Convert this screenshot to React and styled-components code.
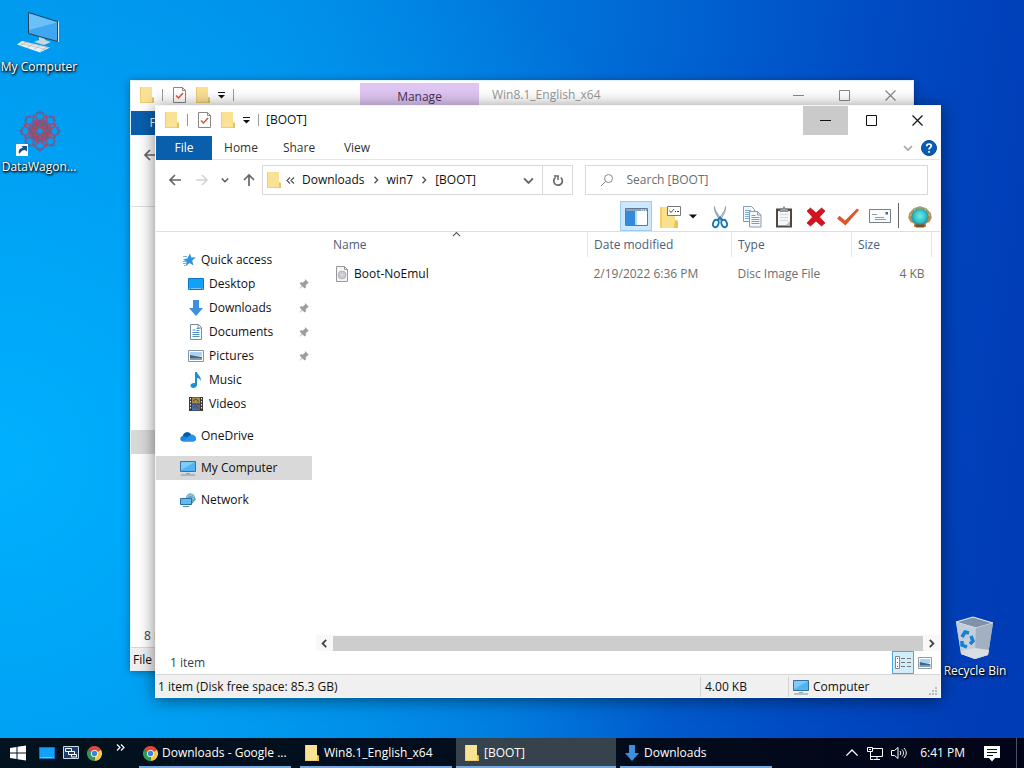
import React from "react";
import styled, { createGlobalStyle, css } from "styled-components";

//Styles
const GlobalStyle = createGlobalStyle`
  * {
    box-sizing: border-box;
  }
  body {
    margin: 0;
    overflow: hidden;
    font-family: "Open Sans", "Noto Sans", sans-serif;
    font-size: 12px;
    line-height: 16px;
    color: #111;
  }
  button, input {
    font: inherit;
    color: inherit;
    background: none;
    border: none;
    padding: 0;
    margin: 0;
  }
  svg {
    display: block;
    flex: none;
  }
`;

const Screen = styled.div`
  display: flex;
  flex-direction: column;
  height: 100vh;
  background: radial-gradient(
      ellipse 70% 90% at 0% 60%,
      rgba(0, 178, 255, 0.95) 0%,
      rgba(0, 170, 250, 0.7) 40%,
      rgba(0, 120, 230, 0) 100%
    ),
    linear-gradient(97deg, #0090e8 0%, #008ae6 25%, #0070d8 52%, #004cc4 78%, #003cb6 96%);
`;

const Workspace = styled.main`
  position: relative;
  flex: 1;
  min-height: 0;
`;

const Shortcut = styled.button`
  position: absolute;
  left: ${({ $left }) => $left || "auto"};
  right: ${({ $right }) => $right || "auto"};
  top: ${({ $top }) => $top};
  width: 78px;
  display: flex;
  flex-direction: column;
  align-items: center;
  gap: 3px;
  color: white;
  white-space: nowrap;
  text-shadow: 1px 1px 2px black, 0 1px 3px black;
`;

const WindowFrame = styled.section`
  position: absolute;
  left: ${({ $left }) => $left};
  top: ${({ $top }) => $top};
  right: ${({ $right }) => $right};
  bottom: ${({ $bottom }) => $bottom};
  display: flex;
  flex-direction: column;
  overflow: hidden;
  background: white;
  border: 1px solid ${({ $active }) => ($active ? "#f4f6f8" : "#e6eef5")};
  box-shadow: ${({ $active }) =>
    $active ? "0 2px 16px rgba(0, 0, 0, 0.5)" : "0 1px 8px rgba(0, 0, 0, 0.35)"};
`;

const TitleBar = styled.header`
  display: flex;
  align-items: flex-start;
  flex: none;
  height: 30px;
  padding-left: 8px;
  color: ${({ $active }) => ($active ? "#111" : "#999")};
`;

const QuickTools = styled.div`
  display: flex;
  align-items: center;
  gap: 6px;
  height: 28px;
`;

const Divider = styled.span`
  width: 1px;
  height: 12px;
  margin-left: 1px;
  background: #999;
`;

const ToolDivider = styled(Divider)`
  height: 25px;
  margin: 0 5px 0 2px;
  background: #666;
`;

const Title = styled.h1`
  flex: 1;
  margin: 0;
  padding-left: ${({ $pad }) => $pad || "7px"};
  font-size: 12px;
  font-weight: 400;
  line-height: 28px;
`;

const ContextTab = styled.div`
  align-self: flex-end;
  width: 119px;
  height: 28px;
  margin-left: 126px;
  padding-top: 6px;
  background: #dfc6f3;
  color: #4b2f5c;
  text-align: center;
`;

const CaptionButtons = styled.div`
  display: flex;
  gap: 1px;
`;

const CaptionButton = styled.button`
  display: flex;
  align-items: center;
  justify-content: center;
  width: 45px;
  height: 29px;
  background: ${({ $hot }) => ($hot ? "#cacaca" : "transparent")};
`;

const RibbonTabs = styled.nav`
  display: flex;
  align-items: center;
  flex: none;
  height: 24px;
  border-bottom: 1px solid #e3e5e8;
  color: #333;
`;

const RibbonTab = styled.button`
  width: 58px;
  height: 24px;
  ${({ $file }) =>
    $file &&
    css`
      width: 56px;
      background: #0a5fad;
      color: white;
    `}
`;

const RibbonEnd = styled.div`
  display: flex;
  align-items: center;
  gap: 8px;
  margin-left: auto;
  padding-right: 3px;
`;

const NavBar = styled.div`
  display: flex;
  align-items: center;
  flex: none;
  height: 40px;
  padding: 0 12px;
`;

const NavButtons = styled.div`
  display: flex;
  align-items: center;
  justify-content: space-between;
  width: 88px;
  margin-right: 6px;
`;

const IconButton = styled.button`
  display: flex;
  align-items: center;
  justify-content: center;
`;

const QuickButton = styled(IconButton)`
  width: ${({ $wide }) => ($wide ? "20px" : "auto")};
`;

const AddressBar = styled.div`
  display: flex;
  align-items: center;
  flex: 306;
  height: 30px;
  padding-left: 3px;
  border: 1px solid #d9d9d9;
`;

const Crumbs = styled.div`
  display: flex;
  align-items: center;
  gap: 7px;
  flex: 1;
  padding-left: 4px;
`;

const RefreshButton = styled(IconButton)`
  width: 30px;
  height: 28px;
  margin-left: 8px;
  border-left: 1px solid #d9d9d9;
`;

const SearchBox = styled.label`
  display: flex;
  align-items: center;
  gap: 12px;
  flex: 326;
  height: 30px;
  margin-left: 12px;
  padding-left: 14px;
  border: 1px solid #d9d9d9;
`;

const SearchInput = styled.input`
  flex: 1;
  min-width: 0;
  outline: none;
  &::placeholder {
    color: #6d6d6d;
    opacity: 1;
  }
`;

const ToolBar = styled.div`
  display: flex;
  align-items: center;
  justify-content: flex-end;
  flex: none;
  height: 32px;
  padding-right: 4px;
  border-bottom: 1px solid #dcdfe3;
`;

const ToolButton = styled(IconButton)`
  width: 32px;
  height: 30px;
  padding-top: 2px;
  ${({ $wide }) =>
    $wide &&
    css`
      width: 52px;
      gap: 8px;
    `}
  ${({ $on }) =>
    $on &&
    css`
      background: #cce8ff;
      border: 1px solid #99ccee;
    `}
`;

const Body = styled.div`
  display: flex;
  flex: 1;
  min-height: 0;
`;

const Sidebar = styled.nav`
  width: 160px;
  padding-top: 16px;
`;

const TreeGroup = styled.div`
  margin-bottom: 8px;
`;

const TreeItem = styled.button`
  display: flex;
  align-items: center;
  gap: 5px;
  width: 156px;
  height: 24px;
  padding: 0 2px 0 ${({ $child }) => ($child ? "32px" : "24px")};
  background: ${({ $selected }) => ($selected ? "#d9d9d9" : "transparent")};
  text-align: left;
`;

const TreeLabel = styled.span`
  flex: 1;
`;

const Content = styled.div`
  display: flex;
  flex-direction: column;
  flex: 1;
  min-width: 0;
`;

const FileTable = styled.table`
  width: calc(100% - 8px);
  border-collapse: collapse;
  table-layout: fixed;
  text-align: left;
`;

const HeadCell = styled.th`
  position: relative;
  width: ${({ $width }) => $width || "auto"};
  height: 25px;
  padding: 0 6px 0 ${({ $first }) => ($first ? "17px" : "6px")};
  border-right: 1px solid #e5e5e5;
  color: #4c607a;
  font-weight: 400;
`;

const SortMark = styled.span`
  position: absolute;
  top: -2px;
  left: 50%;
`;

const Cell = styled.td`
  height: 33px;
  padding: 0 7px 0 6px;
  color: #6d6d6d;
  text-align: ${({ $right }) => ($right ? "right" : "left")};
`;

const NameCell = styled(Cell)`
  padding-left: 19px;
  color: #111;
`;

const FileName = styled.div`
  display: flex;
  align-items: center;
  gap: 5px;
`;

const ScrollBar = styled.div`
  display: flex;
  align-items: center;
  height: 16px;
  margin-top: auto;
  background: #f8f8f8;
`;

const ScrollArrow = styled(IconButton)`
  width: 17px;
  height: 16px;
`;

const ScrollThumb = styled.div`
  flex: 1;
  height: 15px;
  background: #cdcdcd;
`;

const CountBar = styled.div`
  display: flex;
  align-items: center;
  flex: none;
  height: 23px;
  padding: 0 4px 0 ${({ $pad }) => $pad || "14px"};
  color: #333f55;
`;

const ViewButtons = styled.div`
  display: flex;
  margin-left: auto;
`;

const ViewButton = styled(IconButton)`
  width: 22px;
  height: 23px;
  ${({ $on }) =>
    $on &&
    css`
      background: #cfeef9;
      border: 1px solid #4fa8d8;
    `}
`;

const StatusBar = styled.footer`
  display: flex;
  align-items: center;
  flex: none;
  height: 23px;
  padding: 2px 0 0 2px;
  border-top: 1px solid #d7d7d7;
  background: #f0f0f0;
  white-space: nowrap;
`;

const StatusCell = styled.div`
  display: flex;
  align-items: center;
  gap: 4px;
  height: 20px;
  width: ${({ $width }) => $width || "auto"};
  flex: ${({ $width }) => ($width ? "none" : 1)};
  padding-left: ${({ $width }) => ($width ? "4px" : 0)};
  border-left: ${({ $width }) => ($width ? "1px solid #d4d4d4" : "none")};
`;

const Grip = styled.span`
  align-self: flex-end;
  margin-left: auto;
  padding: 0 2px 1px 0;
`;

const BackTree = styled.div`
  flex: 1;
  padding-top: 223px;
`;

const BackRow = styled.div`
  width: 156px;
  height: 24px;
  background: #d9d9d9;
`;

const TaskBar = styled.footer`
  display: flex;
  align-items: center;
  flex: none;
  height: 30px;
  background: linear-gradient(90deg, #02121f, #030c1c 60%, #020518);
  color: white;
`;

const Pinned = styled.div`
  display: flex;
  align-items: center;
  gap: 8px;
  width: 139px;
  padding-left: 9px;
`;

const StartButton = styled(IconButton)`
  margin-right: 4px;
`;

const MoreButton = styled(IconButton)`
  margin-left: 6px;
  padding-bottom: 12px;
`;

const TaskButton = styled.button`
  display: flex;
  align-items: center;
  gap: 4px;
  width: ${({ $active }) => ($active ? "160px" : "152px")};
  height: 30px;
  margin-right: ${({ $gap }) => $gap || "4px"};
  padding-left: ${({ $active }) => ($active ? "8px" : "4px")};
  box-shadow: inset 0 -2px #76a9e0;
  background: ${({ $active }) => ($active ? "#36434d" : "transparent")};
  white-space: nowrap;
`;

const Tray = styled.div`
  display: flex;
  align-items: center;
  gap: 8px;
  height: 30px;
  margin-left: auto;
`;

const Clock = styled.span`
  padding: 0 11px 0 4px;
`;

const ShowDesktop = styled.button`
  width: 8px;
  height: 30px;
  margin-left: 8px;
  border-left: 1px solid #4a5160;
`;

//Icons
const FolderIcon = () => (
  <svg width="16" height="17" viewBox="0 0 16 17">
    <path d="M1 1h12v9l2 1v5H1z" fill="#f5d374" />
    <path d="M1 0h12v16H1z" fill="#fbe194" />
    <path d="M1 0h1v16H1zM1 15h12v1H1z" fill="#efcd74" />
    <path d="M13 10l2 1v5h-2z" fill="#eac559" />
  </svg>
);

const CheckDocIcon = () => (
  <svg width="15" height="16" viewBox="0 0 15 16">
    <path d="M1.500 .5h9l3 3v12h-12z" fill="white" stroke="#888" />
    <path d="M10.500 .5v3h3" fill="none" stroke="#888" />
    <path d="M4 8.500l2.500 2.500 4.500-5" fill="none" stroke="#d0563c" strokeWidth="1.500" />
  </svg>
);

const QuickArrow = () => (
  <svg width="9" height="8" viewBox="0 0 9 8">
    <path d="M1 1.500h7" stroke="#111" />
    <path d="M1 4h7L4.500 7.500z" fill="#111" />
  </svg>
);

const Chevron = ({ dir = "right", size = 8, color = "#555", weight = 1.4 }) => {
  const turn = { right: 0, down: 90, left: 180, up: 270 }[dir];
  return (
    <svg width={size} height={size} viewBox="0 0 8 8">
      <path
        d="M2.500 .8L5.700 4 2.500 7.200"
        fill="none"
        stroke={color}
        strokeWidth={weight}
        transform={`rotate(${turn} 4 4)`}
      />
    </svg>
  );
};

const DoubleChevron = ({ flip, color = "#555", size = 9 }) => (
  <svg width={size} height={size} viewBox="0 0 9 9">
    <path
      d={flip ? "M1 1.500l3 3-3 3M5 1.500l3 3-3 3" : "M4 1.500l-3 3 3 3M8 1.500l-3 3 3 3"}
      fill="none"
      stroke={color}
      strokeWidth="1.200"
    />
  </svg>
);

const Arrow = ({ color = "#666", up }) => (
  <svg width="14" height="14" viewBox="0 0 14 14">
    <path
      d={up ? "M7 13V2M2 7l5-5 5 5" : "M13 7H2M7 2L2 7l5 5"}
      fill="none"
      stroke={color}
      strokeWidth="1.700"
    />
  </svg>
);

const ForwardArrow = () => (
  <svg width="14" height="14" viewBox="0 0 14 14">
    <path d="M1 7h11M7 2l5 5-5 5" fill="none" stroke="#d2d2d2" strokeWidth="1.500" />
  </svg>
);

const RefreshIcon = () => (
  <svg width="12" height="13" viewBox="0 0 12 13">
    <path d="M8.800 3.600a4.300 4.300 0 1 1-5.200-.2" fill="none" stroke="#666" strokeWidth="1.700" />
    <path d="M2 2h4v4" fill="none" stroke="#666" strokeWidth="1.500" />
  </svg>
);

const SearchIcon = () => (
  <svg width="14" height="14" viewBox="0 0 14 14">
    <circle cx="8.500" cy="5.500" r="4" fill="none" stroke="#888" />
    <path d="M5.500 8.500L1 13" stroke="#888" />
  </svg>
);

const MinIcon = ({ color }) => (
  <svg width="11" height="11" viewBox="0 0 11 11">
    <path d="M0 5.500h11" stroke={color} />
  </svg>
);

const MaxIcon = ({ color }) => (
  <svg width="11" height="11" viewBox="0 0 11 11">
    <path d="M.5 .5h10v10H.5z" fill="none" stroke={color} />
  </svg>
);

const CloseIcon = ({ color }) => (
  <svg width="11" height="11" viewBox="0 0 11 11">
    <path d="M.5 .5l10 10M10.500 .5l-10 10" stroke={color} strokeWidth="1.200" />
  </svg>
);

const HelpIcon = () => (
  <svg width="16" height="16" viewBox="0 0 16 16">
    <circle cx="8" cy="8" r="7.500" fill="#0b5cb0" stroke="#084a93" />
    <path
      d="M5.700 6.200c0-3 4.800-2.800 4.600-.2C10.200 7.600 8 7.600 8 9.600M8 11v1.700"
      fill="none"
      stroke="white"
      strokeWidth="1.700"
    />
  </svg>
);

const PaneIcon = () => (
  <svg width="23" height="20" viewBox="0 0 23 20">
    <path d="M.5 1.500h22v17H.5z" fill="white" stroke="#5d7b99" />
    <path d="M1 2h21v2H1z" fill="#8fa3b8" />
    <path d="M1 4h9v14H1z" fill="#3489d8" />
    <path d="M10 4h2v14h-2z" fill="#b9d8f2" />
    <path d="M16 3h1M18 3h1M20 3h1" stroke="#fff" />
  </svg>
);

const FolderOptionsIcon = () => (
  <svg width="22" height="22" viewBox="0 0 22 22">
    <path d="M1 1h15v13l3 1v7H1z" fill="#fbe08c" />
    <path d="M1 1h2v21H1z" fill="#f3cf6a" />
    <path d="M16 14l3 1v7h-4z" fill="#e9c34f" />
    <path d="M8.500 .5h13v9h-13z" fill="white" stroke="#777" />
    <path d="M10.500 4.500l1.500 2 3-3.500" fill="none" stroke="#555" />
    <path d="M16 5.500h1M18 5.500h2" stroke="#444" />
  </svg>
);

const DropTriangle = () => (
  <svg width="8" height="5" viewBox="0 0 8 5">
    <path d="M0 .5h8L4 4.500z" fill="#111" />
  </svg>
);

const CutIcon = () => (
  <svg width="18" height="24" viewBox="0 0 18 24">
    <path d="M3.500 1.500c0 4 4 8 7.500 14l-2-.5c-3-4-6-8-5.500-13.500z" fill="#aab4bc" stroke="#8c969e" strokeWidth=".8" />
    <path d="M14.500 1.500c0 4-4 8-7.500 14l2-.5c3-4 6-8 5.500-13.500z" fill="#ccd3d8" stroke="#8c969e" strokeWidth=".8" />
    <ellipse cx="4.800" cy="18.500" rx="2.700" ry="3.800" fill="none" stroke="#1479b8" strokeWidth="1.800" transform="rotate(20 4.800 18.500)" />
    <ellipse cx="13.200" cy="18.500" rx="2.700" ry="3.800" fill="none" stroke="#1479b8" strokeWidth="1.800" transform="rotate(-20 13.200 18.500)" />
    <path d="M6 15.500l3-3 3 3" fill="none" stroke="#1479b8" strokeWidth="1.800" />
  </svg>
);

const CopyIcon = () => (
  <svg width="19" height="22" viewBox="0 0 19 22">
    <path d="M.5 .5h8l3 3v12H.5z" fill="#f4f8fc" stroke="#8d9baa" />
    <path d="M2 4.500h6M2 6.500h4M2 8.500h4M2 10.500h4M2 12.500h4" stroke="#7fabd8" />
    <path d="M6.500 5.500h8l3.500 3.500v12H6.500z" fill="#f4f8fc" stroke="#8d9baa" />
    <path d="M14.500 5.500v3.500H18" fill="none" stroke="#8d9baa" />
    <path d="M8.500 9.500h4M8.500 11.500h8M8.500 13.500h8M8.500 15.500h8M8.500 17.500h8" stroke="#6c9fd4" />
  </svg>
);

const PasteIcon = () => (
  <svg width="18" height="22" viewBox="0 0 18 22">
    <path d="M1 2.500h16v19H1z" fill="#4f4740" />
    <path d="M3 5h12v14.500H3z" fill="#f7f7f7" />
    <path d="M5 5V3h2.500L9 .5 10.500 3H13v2.500H5z" fill="#9aa1a8" stroke="#666" strokeWidth=".6" />
    <path d="M5 8.500h8M5 11.500h8M5 14.500h8" stroke="#d5d8db" />
    <path d="M10.500 19.500L15 15v4.500z" fill="#b9bec3" />
  </svg>
);

const DeleteIcon = () => (
  <svg width="20" height="20" viewBox="0 0 20 20">
    <path
      d="M1 4l3.500-3L10 6l5.500-5L19 4l-5.500 6 5.500 6-3.500 3L10 14l-5.500 5L1 16l5.500-6z"
      fill="#d8121c"
      stroke="#b00c15"
      strokeWidth=".7"
    />
  </svg>
);

const TickIcon = () => (
  <svg width="22" height="18" viewBox="0 0 22 18">
    <path d="M0 10.500l2.500-2.700 5.500 4.700L20 .5l2 1.500L8.500 17.500z" fill="#e2552a" />
  </svg>
);

const RenameIcon = () => (
  <svg width="22" height="15" viewBox="0 0 22 15">
    <path d="M.5 .5h21v13H.5z" fill="#fafbfd" stroke="#77818c" />
    <path d="M16.500 3h2.500v2.500h-2.500z" fill="#4b6687" />
    <path d="M3 5.500h5M6 8.500h9M6 10.500h11" stroke="#8d9aa8" />
  </svg>
);

const ShellIcon = () => (
  <svg width="24" height="22" viewBox="0 0 24 22">
    <defs>
      <radialGradient id="shell" cx="50%" cy="45%" r="50%">
        <stop offset="0" stopColor="#6fe8e4" />
        <stop offset="0.600" stopColor="#3cc8cc" />
        <stop offset="1" stopColor="#1f97a6" />
      </radialGradient>
    </defs>
    <path
      d="M12 0l3 1.200 3 .8 2.500 2.500 2.500 3 .7 4.500-2.200 4-3.500 1.500V21H6v-3.500L2.500 16 .3 12 1 7.500l2.500-3L6 2l3-.8z"
      fill="#c08a50"
    />
    <path d="M2 8l6 4M12 0v6M22 8l-6 4M6 2l3 7M18 2l-3 7" stroke="#7fc7a0" strokeWidth="2" />
    <circle cx="12" cy="11" r="8.500" fill="url(#shell)" />
    <path d="M7 18.500h10l-1 3H8z" fill="#8b4a22" />
  </svg>
);

const StarIcon = () => (
  <svg width="16" height="16" viewBox="0 0 16 16">
    <path d="M10 1.500l1.300 4 4.500-.2-3.600 3.400 1.300 4.700-4-2.500-3.500 3.100.5-4.600L3 7.600l4.300-1.200z" fill="#2b95e0" />
    <path d="M3 4.500h4M3 9.500h3M3 11.500h3M4 13.500h2" stroke="#74b9ea" />
  </svg>
);

const DesktopIcon = () => (
  <svg width="16" height="12" viewBox="0 0 16 12">
    <path d="M.5 .5h15v11H.5z" fill="#12a0f8" stroke="#0a78c8" />
    <path d="M1 10.500h1M3 10.500h10M14 10.500h1" stroke="#7cc6f8" />
  </svg>
);

const DownIcon = () => (
  <svg width="16" height="16" viewBox="0 0 16 16">
    <path d="M5 0h6v8h4l-7 8-7-8h4z" fill="#3d8fe0" />
  </svg>
);

const DocIcon = () => (
  <svg width="16" height="16" viewBox="0 0 16 16">
    <path d="M2.500 .5h8l3 3v12h-11z" fill="white" stroke="#7c8b99" />
    <path d="M4.500 6h3M8.500 4.500h3M8.500 6.500h3M4.500 8.500h7M4.500 10.500h7M4.500 12.500h7" stroke="#4d91c9" />
    <path d="M10 .5v3.500h3.500" fill="none" stroke="#7c8b99" />
  </svg>
);

const PictureIcon = ({ width = 16 }) => (
  <svg width={width} height="12" viewBox="0 0 16 12" preserveAspectRatio="none">
    <path d="M.5 .5h15v11H.5z" fill="white" stroke="#8694a3" />
    <path d="M2 2h12v4H2z" fill="#aad2f3" />
    <path d="M2 5l5 1 7 1v3H2z" fill="#45647f" />
    <path d="M2 8h12v2H2z" fill="#7b9db8" />
  </svg>
);

const MusicIcon = () => (
  <svg width="16" height="16" viewBox="0 0 16 16">
    <path d="M7 0h2c.2 3 4.500 3.800 3.800 9-.8-2-2-2.700-3.800-3v7c0 3.500-6.500 4-6.500.8 0-2.300 2.500-3 4.500-2.600z" fill="#1a8fd6" />
  </svg>
);

const VideoIcon = () => (
  <svg width="16" height="16" viewBox="0 0 16 16">
    <path d="M1 1h14v14H1z" fill="#3a3a3a" />
    <path d="M4 1.500h8v6H4z" fill="#a58b4a" />
    <path d="M4 8.500h8v6H4z" fill="#3e6fb5" />
    <path d="M5 5l3-2 3 3M5 12l3-2 3 3" stroke="#7a3c30" fill="none" />
    <path d="M2.500 2v12M13.500 2v12" stroke="#e8e8e8" strokeDasharray="1.500 1.500" />
  </svg>
);

const CloudIcon = () => (
  <svg width="16" height="11" viewBox="0 0 16 11">
    <path d="M3.500 10.500C-.5 10.500-.8 5.500 2.800 5 3.500 1.500 8.500-.7 11 3.500c3 0 5 2 5 4.200 0 1.800-1.500 2.800-3 2.800z" fill="#1b86db" />
    <path d="M2.800 5C3.500 1.500 8.500-.7 11 3.500L7 6z" fill="#0c59a6" />
    <path d="M3 10.500L11 4c3 0 5 1.800 5 3.800 0 1.700-1.500 2.700-3 2.700z" fill="#2793e8" />
  </svg>
);

const MonitorIcon = () => (
  <svg width="16" height="15" viewBox="0 0 16 15">
    <path d="M.5 .5h15v10H.5z" fill="#4fb4f4" stroke="#3a6f99" />
    <path d="M1 1h14L1 9z" fill="#7fcbfa" />
    <path d="M6 12.500h4" stroke="#7ab" />
    <path d="M1 14h14" stroke="#7d93a5" />
  </svg>
);

const NetworkIcon = () => (
  <svg width="16" height="16" viewBox="0 0 16 16">
    <path d="M10 1l6 6-5 6-5-5z" fill="#4f95b0" />
    <circle cx="10.500" cy="6" r="4.500" fill="#62a9c4" />
    <path d="M7 5c3-3 5-2 7 0M8 9l6-3" stroke="#a8d8e8" fill="none" />
    <path d="M.5 6.500h11v6H.5z" fill="#5dbcf5" stroke="#2e6f9e" />
    <path d="M3 14.500h6" stroke="#4b8fb8" />
  </svg>
);

const PinIcon = () => (
  <svg width="12" height="12" viewBox="0 0 12 12">
    <path d="M7 1l4 4-1.200.3-2 2 .2 2L6.500 10.500 4.300 8.200 1 11.200l2.700-3.700L1.500 5.500 3 4.200l2 .2 2-2z" fill="#9a9fa5" />
  </svg>
);

const DiscFileIcon = () => (
  <svg width="14" height="16" viewBox="0 0 14 16">
    <path d="M1.500 .5h8l3 3v12h-11z" fill="#f5f5f5" stroke="#999" />
    <path d="M9.500 .5v3h3" fill="none" stroke="#999" />
    <circle cx="7" cy="9" r="4" fill="#c9cdd1" stroke="#a5a9ad" strokeWidth=".7" />
    <circle cx="7" cy="9" r="1.200" fill="#ddd" />
  </svg>
);

const DetailsIcon = () => (
  <svg width="16" height="13" viewBox="0 0 16 13">
    <path d="M.5 .5h4v12h-4z" fill="white" stroke="#8a7f95" />
    <path d="M2 2.500h1M2 6.500h1M2 10.500h1" stroke="#a33" />
    <path d="M6 2.500h4M12 2.500h4M6 6.500h4M12 6.500h4M6 10.500h4M12 10.500h4" stroke="#777" />
  </svg>
);

const GripIcon = () => (
  <svg width="10" height="10" viewBox="0 0 10 10">
    <path d="M7 1h2v2H7zM4 4h2v2H4zM7 4h2v2H7zM1 7h2v2H1zM4 7h2v2H4zM7 7h2v2H7z" fill="#bcbcbc" />
  </svg>
);

const BigComputerIcon = () => (
  <svg width="44" height="44" viewBox="0 0 44 44">
    <path d="M11.500 .5l29 9v20l-29-8z" fill="#3fa6f0" stroke="#22445f" />
    <path d="M12 1.500l28 9L12 18z" fill="#6cc0f8" />
    <path d="M41.500 9.500v20.500" stroke="#d8e4ec" />
    <path d="M22 25l6 2v1l6 2-7 3-10-3 5-2z" fill="#ccd6dd" />
    <path d="M5 29l28 6.500-10 5L0 32.500z" fill="#eef1f3" />
    <path d="M4 31.500l25 6M7 30l25 6M10 30L3 33.500M17 31.500l-7 4M24 33l-7 4.500M30 35l-7 4.500" stroke="#a5afb6" strokeWidth=".6" />
  </svg>
);

const WagonIcon = () => (
  <svg width="48" height="46" viewBox="0 0 48 46">
    {[0, 45, 90, 135, 180, 225, 270, 315].map((a) => (
      <g key={a} transform={`rotate(${a} 25 21)`} fill="none" strokeWidth="1.300">
        <path d="M25 1l5 5-5 8-5-8z" stroke="#8f5277" />
        <path d="M18 5l7 6 7-6M20 11l5 6 5-6z" stroke="#99507a" />
        <path d="M21 3h8M22 15l3-5 3 5" stroke="#4c68a8" />
        <path d="M22 13h6l-3 5z" stroke="#a8455a" />
      </g>
    ))}
    <path d="M1 34h12v12H1z" fill="white" />
    <path d="M4 44c-1-4 1-6 4-6l-1.500-2H12v5.500L10 40c-3 0-4 2-6 4z" fill="#1c4f8c" />
  </svg>
);

const BinIcon = () => (
  <svg width="40" height="44" viewBox="0 0 40 44">
    <path d="M1 6l17-5 20 6-5 32-13 4L6 38z" fill="#b9c6d4" opacity=".95" />
    <path d="M1 6l17-5 20 6-17 5z" fill="#7f92aa" stroke="#e7edf2" />
    <path d="M1 6l20 6-1 31L6 38z" fill="#c2cedb" />
    <path d="M38 7L21 12l-1 31 13-4z" fill="#a2b0c1" />
    <path d="M6 35l14-3 14 2-1 5-13 4-14-5z" fill="#d9dee3" />
    <path
      d="M7 21l3-5 4 1M16 20l2 5-3 3M12 31l-5-2 0-4"
      fill="none"
      stroke="#1681d2"
      strokeWidth="3.500"
    />
  </svg>
);

const StartIcon = () => (
  <svg width="18" height="16" viewBox="0 0 18 16">
    <path d="M1 3l6.500-1v5.500H1zM8.500 1.800L17 .5v7H8.500zM1 8.500h6.500V14L1 13zM8.500 8.500H17v7l-8.500-1.300z" fill="white" />
  </svg>
);

const TaskViewIcon = () => (
  <svg width="16" height="14" viewBox="0 0 16 14">
    <path d="M.5 .5h15v12H.5z" fill="#1d3e6d" stroke="#c9d8ea" />
    <path d="M2.500 2.500h6v3h-6zM5.500 5.500h6v3h-6zM8.500 8.500h5v2.500h-5z" fill="#1d3e6d" stroke="white" />
  </svg>
);

const ChromeIcon = () => (
  <svg width="15" height="15" viewBox="0 0 16 16">
    <path d="M8 8L1.070 4A8 8 0 0 1 14.930 4z" fill="#e0483a" />
    <path d="M8 8l6.930-4A8 8 0 0 1 8 16z" fill="#f8cb3c" />
    <path d="M8 8v8A8 8 0 0 1 1.070 4z" fill="#2d9e52" />
    <circle cx="8" cy="8" r="3.800" fill="white" />
    <circle cx="8" cy="8" r="2.900" fill="#3f7fe0" />
  </svg>
);

const TrayMonitorIcon = () => (
  <svg width="16" height="15" viewBox="0 0 16 15">
    <path d="M6 2.500h9.500v8H4M10 10.500v3M7 13.500h6M3.500 6v7.500h3" fill="none" stroke="white" />
    <path d="M.5 1.500h5v4h-5z" fill="none" stroke="white" />
    <path d="M2 3.500h2" stroke="white" />
  </svg>
);

const SpeakerIcon = () => (
  <svg width="17" height="14" viewBox="0 0 17 14">
    <path d="M.5 4.500h3l3.500-3v11l-3.500-3h-3z" fill="none" stroke="white" />
    <path d="M9 5c1 1.500 1 2.500 0 4M11 3.500c2 2.500 2 4.500 0 7M13 2c3 3.500 3 6.500 0 10" fill="none" stroke="white" />
  </svg>
);

const NoteIcon = () => (
  <svg width="16" height="17" viewBox="0 0 16 17">
    <path d="M0 1h16v12h-5l-3 3.500L5 13H0z" fill="white" />
    <path d="M3 4.500h10M3 7.500h10M3 10.500h6" stroke="#030c1c" />
  </svg>
);

const treeChildren = [
  { name: "Desktop", icon: <DesktopIcon />, pinned: true },
  { name: "Downloads", icon: <DownIcon />, pinned: true },
  { name: "Documents", icon: <DocIcon />, pinned: true },
  { name: "Pictures", icon: <PictureIcon />, pinned: true },
  { name: "Music", icon: <MusicIcon /> },
  { name: "Videos", icon: <VideoIcon /> },
];

const treeRoots = [
  { name: "OneDrive", icon: <CloudIcon /> },
  { name: "My Computer", icon: <MonitorIcon />, selected: true },
  { name: "Network", icon: <NetworkIcon /> },
];

function TitleTools() {
  return (
    <QuickTools>
      <FolderIcon />
      <Divider />
      <QuickButton $wide aria-label="Properties">
        <CheckDocIcon />
      </QuickButton>
      <QuickButton aria-label="New folder">
        <FolderIcon />
      </QuickButton>
      <QuickButton aria-label="Customize toolbar">
        <QuickArrow />
      </QuickButton>
      <Divider />
    </QuickTools>
  );
}

function WindowButtons({ color, hot }) {
  return (
    <CaptionButtons>
      <CaptionButton aria-label="Minimize" $hot={hot}>
        <MinIcon color={color} />
      </CaptionButton>
      <CaptionButton aria-label="Maximize">
        <MaxIcon color={color} />
      </CaptionButton>
      <CaptionButton aria-label="Close">
        <CloseIcon color={color} />
      </CaptionButton>
    </CaptionButtons>
  );
}

function BackWindow() {
  return (
    <WindowFrame $left="130px" $top="80px" $right="110px" $bottom="67px">
      <TitleBar>
        <TitleTools />
        <ContextTab>Manage</ContextTab>
        <Title $pad="13px">Win8.1_English_x64</Title>
        <WindowButtons color="#888" />
      </TitleBar>
      <RibbonTabs>
        <RibbonTab $file>File</RibbonTab>
      </RibbonTabs>
      <NavBar>
        <Arrow />
      </NavBar>
      <ToolBar />
      <BackTree>
        <BackRow />
      </BackTree>
      <CountBar $pad="13px">8 items</CountBar>
      <StatusBar>File o</StatusBar>
    </WindowFrame>
  );
}

function Navigation() {
  return (
    <NavBar>
      <NavButtons>
        <IconButton aria-label="Back">
          <Arrow />
        </IconButton>
        <IconButton aria-label="Forward">
          <ForwardArrow />
        </IconButton>
        <IconButton aria-label="Recent locations">
          <Chevron dir="down" />
        </IconButton>
        <IconButton aria-label="Up">
          <Arrow up />
        </IconButton>
      </NavButtons>
      <AddressBar>
        <FolderIcon />
        <Crumbs>
          <DoubleChevron />
          <button>Downloads</button>
          <Chevron />
          <button>win7</button>
          <Chevron />
          <button>[BOOT]</button>
        </Crumbs>
        <IconButton aria-label="Previous locations">
          <Chevron dir="down" size={11} color="#666" />
        </IconButton>
        <RefreshButton aria-label="Refresh">
          <RefreshIcon />
        </RefreshButton>
      </AddressBar>
      <SearchBox>
        <SearchIcon />
        <SearchInput placeholder="Search [BOOT]" aria-label="Search [BOOT]" />
      </SearchBox>
    </NavBar>
  );
}

function Tools() {
  return (
    <ToolBar>
      <ToolButton $on aria-label="Navigation pane">
        <PaneIcon />
      </ToolButton>
      <ToolButton $wide aria-label="Folder options">
        <FolderOptionsIcon />
        <DropTriangle />
      </ToolButton>
      <ToolButton aria-label="Cut">
        <CutIcon />
      </ToolButton>
      <ToolButton aria-label="Copy">
        <CopyIcon />
      </ToolButton>
      <ToolButton aria-label="Paste">
        <PasteIcon />
      </ToolButton>
      <ToolButton aria-label="Delete">
        <DeleteIcon />
      </ToolButton>
      <ToolButton aria-label="Apply">
        <TickIcon />
      </ToolButton>
      <ToolButton aria-label="Rename">
        <RenameIcon />
      </ToolButton>
      <ToolDivider />
      <ToolButton aria-label="Shell">
        <ShellIcon />
      </ToolButton>
    </ToolBar>
  );
}

function Tree() {
  return (
    <Sidebar>
      <TreeGroup>
        <TreeItem>
          <StarIcon />
          <TreeLabel>Quick access</TreeLabel>
        </TreeItem>
        {treeChildren.map((item) => (
          <TreeItem key={item.name} $child>
            {item.icon}
            <TreeLabel>{item.name}</TreeLabel>
            {item.pinned && <PinIcon />}
          </TreeItem>
        ))}
      </TreeGroup>
      {treeRoots.map((item) => (
        <TreeGroup key={item.name}>
          <TreeItem $selected={item.selected}>
            {item.icon}
            <TreeLabel>{item.name}</TreeLabel>
          </TreeItem>
        </TreeGroup>
      ))}
    </Sidebar>
  );
}

function Files() {
  return (
    <Content>
      <FileTable>
        <thead>
          <tr>
            <HeadCell $first>
              Name
              <SortMark>
                <Chevron dir="up" size={9} weight={1} />
              </SortMark>
            </HeadCell>
            <HeadCell $width="144px">Date modified</HeadCell>
            <HeadCell $width="120px">Type</HeadCell>
            <HeadCell $width="80px">Size</HeadCell>
          </tr>
        </thead>
        <tbody>
          <tr>
            <NameCell>
              <FileName>
                <DiscFileIcon />
                Boot-NoEmul
              </FileName>
            </NameCell>
            <Cell>2/19/2022 6:36 PM</Cell>
            <Cell>Disc Image File</Cell>
            <Cell $right>4 KB</Cell>
          </tr>
        </tbody>
      </FileTable>
      <ScrollBar>
        <ScrollArrow aria-label="Scroll left">
          <Chevron dir="left" size={9} color="#444" weight={1.6} />
        </ScrollArrow>
        <ScrollThumb />
        <ScrollArrow aria-label="Scroll right">
          <Chevron size={9} color="#444" weight={1.6} />
        </ScrollArrow>
      </ScrollBar>
    </Content>
  );
}

function FrontWindow() {
  return (
    <WindowFrame $active $left="155px" $top="105px" $right="83px" $bottom="40px">
      <TitleBar $active>
        <TitleTools />
        <Title>[BOOT]</Title>
        <WindowButtons color="#111" hot />
      </TitleBar>
      <RibbonTabs>
        <RibbonTab $file>File</RibbonTab>
        <RibbonTab>Home</RibbonTab>
        <RibbonTab>Share</RibbonTab>
        <RibbonTab>View</RibbonTab>
        <RibbonEnd>
          <IconButton aria-label="Expand the ribbon">
            <Chevron dir="down" size={10} color="#aaa" />
          </IconButton>
          <IconButton aria-label="Help">
            <HelpIcon />
          </IconButton>
        </RibbonEnd>
      </RibbonTabs>
      <Navigation />
      <Tools />
      <Body>
        <Tree />
        <Files />
      </Body>
      <CountBar>
        1 item
        <ViewButtons>
          <ViewButton $on aria-label="Details view">
            <DetailsIcon />
          </ViewButton>
          <ViewButton aria-label="Large icons view">
            <PictureIcon width={14} />
          </ViewButton>
        </ViewButtons>
      </CountBar>
      <StatusBar>
        <StatusCell>1 item (Disk free space: 85.3 GB)</StatusCell>
        <StatusCell $width="88px">4.00 KB</StatusCell>
        <StatusCell $width="152px">
          <MonitorIcon />
          Computer
          <Grip>
            <GripIcon />
          </Grip>
        </StatusCell>
      </StatusBar>
    </WindowFrame>
  );
}

export default function App() {
  return (
    <>
      <GlobalStyle />
      <Screen>
        <Workspace>
          <Shortcut $left="0px" $top="12px">
            <BigComputerIcon />
            My Computer
          </Shortcut>
          <Shortcut $left="0px" $top="110px">
            <WagonIcon />
            DataWagon...
          </Shortcut>
          <Shortcut $right="10px" $top="616px">
            <BinIcon />
            Recycle Bin
          </Shortcut>
          <BackWindow />
          <FrontWindow />
        </Workspace>
        <TaskBar>
          <Pinned>
            <StartButton aria-label="Start">
              <StartIcon />
            </StartButton>
            <IconButton aria-label="Show desktop">
              <DesktopIcon />
            </IconButton>
            <IconButton aria-label="Task view">
              <TaskViewIcon />
            </IconButton>
            <IconButton aria-label="Chrome">
              <ChromeIcon />
            </IconButton>
            <MoreButton aria-label="More">
              <DoubleChevron flip color="white" />
            </MoreButton>
          </Pinned>
          <TaskButton $gap="9px">
            <ChromeIcon />
            Downloads - Google ...
          </TaskButton>
          <TaskButton>
            <FolderIcon />
            Win8.1_English_x64
          </TaskButton>
          <TaskButton $active>
            <FolderIcon />
            [BOOT]
          </TaskButton>
          <TaskButton>
            <DownIcon />
            Downloads
          </TaskButton>
          <Tray>
            <IconButton aria-label="Hidden icons">
              <Chevron dir="up" size={14} color="white" weight={0.8} />
            </IconButton>
            <TrayMonitorIcon />
            <SpeakerIcon />
            <Clock>6:41 PM</Clock>
            <IconButton aria-label="Notifications">
              <NoteIcon />
            </IconButton>
            <ShowDesktop aria-label="Peek at desktop" />
          </Tray>
        </TaskBar>
      </Screen>
    </>
  );
}
